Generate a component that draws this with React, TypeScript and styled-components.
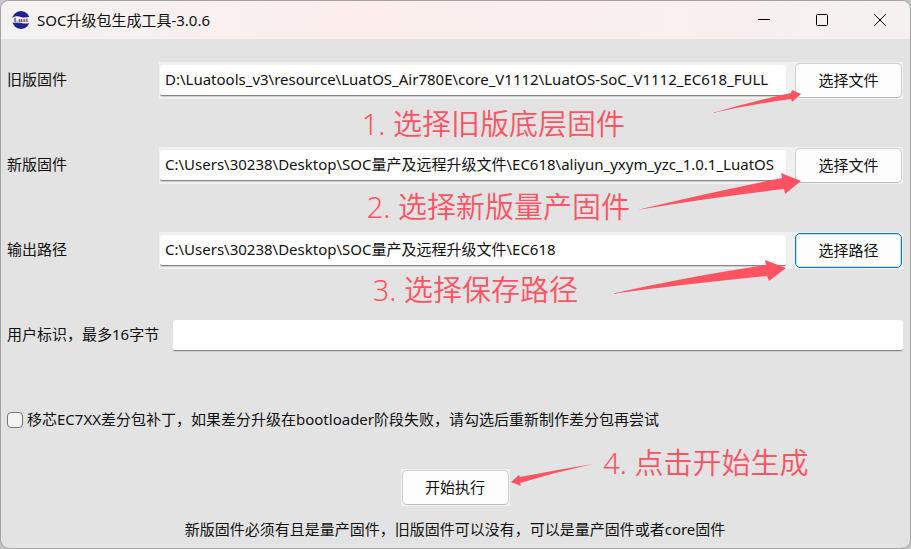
import React from "react";
import styled, { createGlobalStyle } from "styled-components";

const GlobalStyle = createGlobalStyle`
  *, *::before, *::after { box-sizing: border-box; }
  body {
    margin: 0;
    background: #c4c4c4;
    font-family: "Noto Sans", "Noto Sans CJK SC", sans-serif;
    font-size: 15px;
    color: #111;
  }
  button, input { font: inherit; color: inherit; }
`;

const AppWindow = styled.main`
  display: flex;
  flex-direction: column;
  min-height: 100vh;
  border: 1px solid #a3a3a3;
  border-radius: 9px;
  background: #e3e3e3;
  overflow: hidden;
`;

const TitleBar = styled.header`
  display: flex;
  align-items: center;
  height: 38px;
  padding: 0 1px 1px 11px;
  gap: 7px;
  background: linear-gradient(90deg, #f4f2f2 0%, #fbeeed 38%, #f9efee 70%, #f5f1f1 100%);
`;

const Title = styled.h1`
  flex: 1;
  margin: 0;
  font-size: 15px;
  font-weight: 400;
  line-height: 20px;
`;

const WindowControls = styled.div`
  display: flex;
`;

const ControlButton = styled.button`
  display: grid;
  place-items: center;
  width: 58px;
  height: 36px;
  padding: 0;
  border: 0;
  background: none;
`;

const Form = styled.form`
  display: flex;
  flex-direction: column;
  padding: 23px 7px 8px 6px;
`;

const Fields = styled.div`
  display: grid;
  gap: 48px;
`;

const Row = styled.div<{ $labelWidth?: number }>`
  position: relative;
  display: grid;
  grid-template-columns: ${(p) => p.$labelWidth ?? 152}px 1fr;
  align-items: center;
  height: 37px;
`;

const Label = styled.label`
  padding-bottom: 3px;
  line-height: 20px;
  white-space: nowrap;
`;

const Picker = styled.div`
  display: flex;
  align-items: center;
  gap: 9px;
  padding: 1px;
  background: #f0f0f0;
`;

const TextInput = styled.input`
  flex: 1;
  min-width: 0;
  width: 100%;
  height: 31px;
  padding: 0 3px 3px 5px;
  border: 0;
  border-bottom: 1px solid #868686;
  border-radius: 3px 3px 2px 2px;
  background: #fff;
  box-shadow: 0 1px 0 #cfcfcf;
  outline: none;
`;

const PushButton = styled.button<{ $focused?: boolean }>`
  width: 107px;
  height: 35px;
  padding: 0 0 2px;
  border: 1px solid;
  border-color: ${(p) => (p.$focused ? "#0f78cf" : "#d0d0d0 #d0d0d0 #bcbcbc")};
  border-radius: 5px;
  background: #fdfdfd;
  box-shadow: ${(p) => (p.$focused ? "inset 0 0 0 1px #c3def3" : "none")};
`;

const CheckRow = styled.div`
  display: flex;
  align-items: center;
  gap: 4px;
  height: 37px;
`;

const CheckBox = styled.input`
  appearance: none;
  width: 16px;
  height: 16px;
  margin: 0 0 2px;
  border: 1px solid #777;
  border-radius: 4px;
  background: #f3f3f3;
`;

const RunArea = styled.div`
  position: relative;
  align-self: center;
  margin-top: 30px;
  padding: 1px;
  background: #f0f0f0;
`;

const Hint = styled.p`
  margin: 13px 0 0;
  line-height: 20px;
  text-align: center;
`;

const Note = styled.span<{ $right: number; $top: number }>`
  position: absolute;
  right: ${(p) => p.$right}px;
  top: ${(p) => p.$top}px;
  font-size: 29px;
  font-weight: 350;
  line-height: 40px;
  white-space: nowrap;
  color: #ff5262;
  pointer-events: none;
`;

const Arrow = styled.svg<{ $right: number; $top: number }>`
  position: absolute;
  right: ${(p) => p.$right}px;
  top: ${(p) => p.$top}px;
  fill: #ff5262;
  pointer-events: none;
`;

const Logo = () => (
  <svg width="18" height="18" viewBox="0 0 18 18" aria-hidden="true">
    <circle cx="9" cy="9" r="9" fill="#1d2192" />
    <path d="M0 7C3 5 6 5 9 6S15 6.500 18 5.500V12C14 13 12 12.500 9 12S3 12 0 11.500Z" fill="#f5f3f8" />
    <text x="9" y="11.300" textAnchor="middle" fontSize="7" fontWeight="700" fontFamily="Liberation Serif, serif" fill="#33339c">
      Lu<tspan fill="#e0304a">a</tspan>t
    </text>
  </svg>
);

const paths = [
  {
    id: "old",
    label: "旧版固件",
    value: "D:\\Luatools_v3\\resource\\LuatOS_Air780E\\core_V1112\\LuatOS-SoC_V1112_EC618_FULL",
    button: "选择文件",
    note: "1. 选择旧版底层固件",
    noteTop: 42,
    noteRight: 278,
    arrow: { right: 102, top: 28, w: 89, h: 24, d: "M0 23Q42 11 79 3L80 0L89 4L80 12L79 9Q42 14 0 23Z" },
  },
  {
    id: "new",
    label: "新版固件",
    value: "C:\\Users\\30238\\Desktop\\SOC量产及远程升级文件\\EC618\\aliyun_yxym_yzc_1.0.1_LuatOS",
    button: "选择文件",
    note: "2. 选择新版量产固件",
    noteTop: 40,
    noteRight: 273,
    arrow: { right: 102, top: 26, w: 164, h: 38, d: "M0 37Q70 20 145 5L144 0L164 8L148 21L147 16Q70 25 0 37Z" },
  },
  {
    id: "out",
    label: "输出路径",
    value: "C:\\Users\\30238\\Desktop\\SOC量产及远程升级文件\\EC618",
    button: "选择路径",
    note: "3. 选择保存路径",
    noteTop: 38,
    noteRight: 325,
    arrow: { right: 117, top: 28, w: 175, h: 35, d: "M0 34Q75 17 155 5L154 0L175 8L158 21L156 16Q75 24 0 34Z" },
  },
];

export default function App() {
  return (
    <>
      <GlobalStyle />
      <AppWindow>
        <TitleBar>
          <Logo />
          <Title>SOC升级包生成工具-3.0.6</Title>
          <WindowControls>
            <ControlButton type="button" aria-label="最小化">
              <svg width="12" height="12" stroke="#000"><path d="M0 5.500H12" /></svg>
            </ControlButton>
            <ControlButton type="button" aria-label="最大化">
              <svg width="12" height="12" fill="none" stroke="#000"><rect x=".5" y=".5" width="11" height="11" rx="1" /></svg>
            </ControlButton>
            <ControlButton type="button" aria-label="关闭">
              <svg width="12" height="12" stroke="#000"><path d="M0 0L12 12M12 0L0 12" /></svg>
            </ControlButton>
          </WindowControls>
        </TitleBar>
        <Form onSubmit={(e) => e.preventDefault()}>
          <Fields>
            {paths.map((p) => (
              <Row key={p.id}>
                <Label htmlFor={p.id}>{p.label}</Label>
                <Picker>
                  <TextInput id={p.id} defaultValue={p.value} spellCheck={false} />
                  <PushButton type="button" $focused={p.id === "out"}>{p.button}</PushButton>
                </Picker>
                <Note $right={p.noteRight} $top={p.noteTop}>{p.note}</Note>
                <Arrow $right={p.arrow.right} $top={p.arrow.top} width={p.arrow.w} height={p.arrow.h} aria-hidden="true">
                  <path d={p.arrow.d} />
                </Arrow>
              </Row>
            ))}
            <Row $labelWidth={166}>
              <Label htmlFor="user">用户标识，最多16字节</Label>
              <TextInput id="user" />
            </Row>
            <CheckRow>
              <CheckBox type="checkbox" id="patch" />
              <Label htmlFor="patch">移芯EC7XX差分包补丁，如果差分升级在bootloader阶段失败，请勾选后重新制作差分包再尝试</Label>
            </CheckRow>
          </Fields>
          <RunArea>
            <PushButton type="submit">开始执行</PushButton>
            <Note $right={-299} $top={-26}>4. 点击开始生成</Note>
            <Arrow $right={-83} $top={-5} width="82" height="23" aria-hidden="true">
              <path d="M82 0Q45 6 9 13L8 11L0 18L10 22L9 19Q45 8 82 0Z" />
            </Arrow>
          </RunArea>
          <Hint>新版固件必须有且是量产固件，旧版固件可以没有，可以是量产固件或者core固件</Hint>
        </Form>
      </AppWindow>
    </>
  );
}
